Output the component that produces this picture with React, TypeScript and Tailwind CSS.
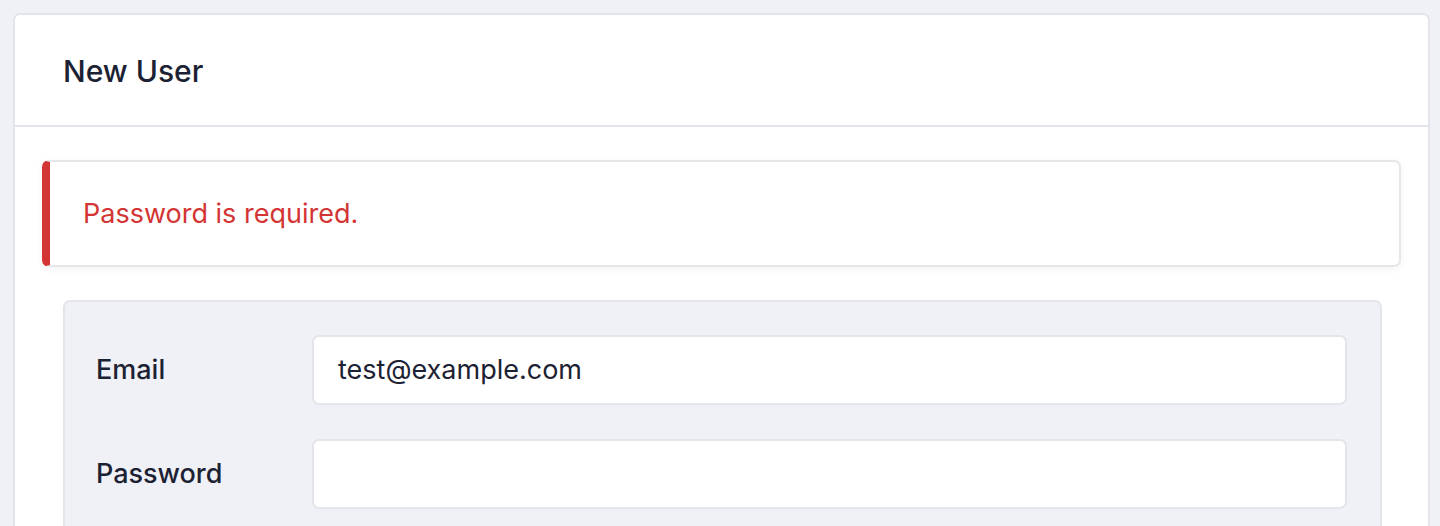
export default function App() {
  const font = { fontFamily: 'Inter, "Noto Sans", sans-serif' };
  return (
    <div className="bg-[#eff1f6] pt-[13px] pl-[13px] pr-[10px] overflow-hidden h-[526px]" style={font}>
      <div className="bg-white border-2 border-[#e3e5ea] rounded-[7px] h-[600px]">
        <div className="h-[112px] flex items-center pl-[48px] pt-[2px] border-b-2 border-[#e3e5ea]">
          <h1 className="text-[30px] font-medium text-[#1c2233] tracking-[0px]">New User</h1>
        </div>
        <div className="pt-[33px] px-[27px]">
          <div className="h-[107px] flex items-center pl-[33px] pt-[2px] bg-white border-2 border-[#e6e7ea] border-l-[8px] border-l-[#d33434] rounded-[7px] shadow-[0_2px_8px_rgba(0,0,0,0.05)]">
            <span className="text-[27px] text-[#d33434]">Password is required.</span>
          </div>
          <div className="mt-[33px] ml-[21px] mr-[19px] bg-[#eff1f6] border-2 border-[#e3e5ea] rounded-[7px] pt-[33px] pl-[31px] pr-[33px] pb-[40px] flex flex-col gap-[34px]">
            <div className="flex items-center">
              <label className="w-[216px] pt-[1px] text-[27px] font-medium text-[#1c2233]">Email</label>
              <div className="flex-1 h-[70px] bg-white border-2 border-[#e3e5ea] rounded-[7px] flex items-center pl-[24px] pt-[1px]">
                <span className="text-[27px] text-[#1c2233]">test@example.com</span>
              </div>
            </div>
            <div className="flex items-center">
              <label className="w-[216px] pt-[1px] text-[27px] font-medium text-[#1c2233]">Password</label>
              <div className="flex-1 h-[70px] bg-white border-2 border-[#e3e5ea] rounded-[7px]"></div>
            </div>
          </div>
        </div>
      </div>
    </div>
  );
}
